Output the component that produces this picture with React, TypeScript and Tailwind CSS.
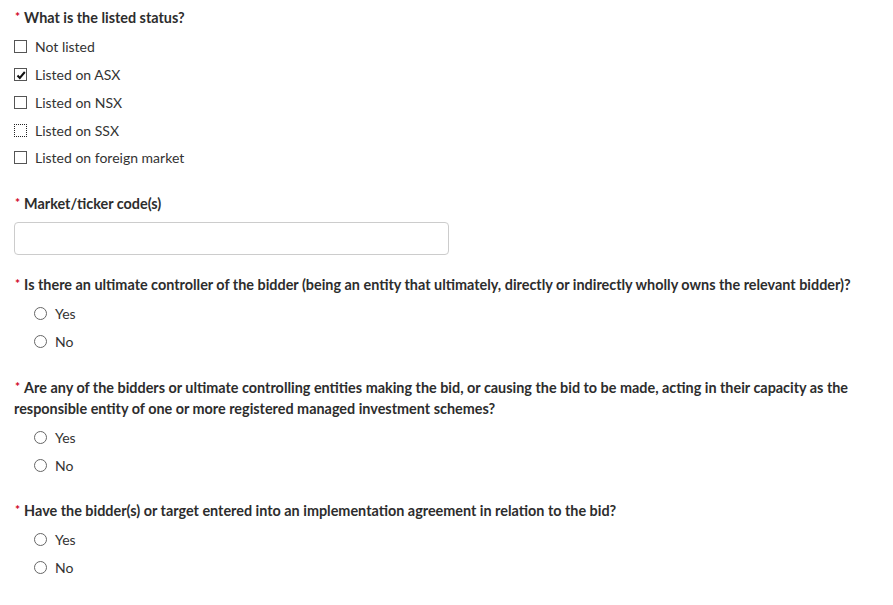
import { useState } from 'react'

type Option = { id: string; label: string }

const LISTED: Option[] = [
  { id: 'none', label: 'Not listed' },
  { id: 'asx', label: 'Listed on ASX' },
  { id: 'nsx', label: 'Listed on NSX' },
  { id: 'ssx', label: 'Listed on SSX' },
  { id: 'foreign', label: 'Listed on foreign market' },
]

const YES_NO: Option[] = [
  { id: 'yes', label: 'Yes' },
  { id: 'no', label: 'No' },
]

function Label({ children }: { children: React.ReactNode }) {
  return (
    <div className="text-[14.4px] font-bold leading-[21px] text-[#2d2d2d]">
      <span className="relative -top-[2px] mr-[4px] ml-[1px] text-[12px] leading-none text-[#d0021b]">*</span>
      {children}
    </div>
  )
}

function CheckRow({ opt, checked, focused, onToggle }: { opt: Option; checked: boolean; focused?: boolean; onToggle: () => void }) {
  return (
    <label className="flex h-[27.75px] cursor-pointer items-center" onClick={onToggle}>
      <span
        className={`flex h-[13px] w-[13px] items-center justify-center border bg-white ${
          focused ? 'border-dotted border-[#222]' : 'border-[#555]'
        }`}
      >
        {checked && (
          <svg viewBox="0 0 10 10" className="h-[10px] w-[10px]">
            <path d="M1.5 5.5 L3.8 8 L8.8 2" fill="none" stroke="#111" strokeWidth="2" />
          </svg>
        )}
      </span>
      <span className="ml-[8px] text-[14px] text-[#333]">{opt.label}</span>
    </label>
  )
}

function RadioGroup({ name, value, onChange }: { name: string; value: string; onChange: (v: string) => void }) {
  return (
    <div className="mt-[5px] pl-[20px]">
      {YES_NO.map((o) => (
        <label key={name + o.id} className="flex h-[28px] cursor-pointer items-center" onClick={() => onChange(o.id)}>
          <span className="flex h-[13px] w-[13px] items-center justify-center rounded-full border border-[#666] bg-white">
            {value === o.id && <span className="h-[5px] w-[5px] rounded-full bg-[#333]" />}
          </span>
          <span className="ml-[8px] text-[14px] text-[#333]">{o.label}</span>
        </label>
      ))}
    </div>
  )
}

export default function App() {
  const [listed, setListed] = useState<string[]>(['asx'])
  const [answers, setAnswers] = useState<Record<string, string>>({})

  const toggle = (id: string) =>
    setListed((l) => (l.includes(id) ? l.filter((x) => x !== id) : [...l, id]))
  const setAnswer = (k: string) => (v: string) => setAnswers((a) => ({ ...a, [k]: v }))

  return (
    <div className="min-h-screen bg-white pt-[7px] pl-[14px]" style={{ fontFamily: 'Lato, "Open Sans", sans-serif' }}>
      <div className="w-[860px]">
        <Label>What is the listed status?</Label>
        <div className="mt-[5px]">
          {LISTED.map((o) => (
            <CheckRow key={o.id} opt={o} checked={listed.includes(o.id)} focused={o.id === 'ssx'} onToggle={() => toggle(o.id)} />
          ))}
        </div>

        <div className="mt-[21px]">
          <Label>Market/ticker code(s)</Label>
          <input
            type="text"
            className="mt-[8px] h-[33px] w-[435px] rounded-[4px] border border-[#ccc] px-[8px] text-[14px] outline-none"
          />
        </div>

        <div className="mt-[19px]">
          <Label>
            Is there an ultimate controller of the bidder (being an entity that ultimately, directly or indirectly wholly owns the relevant bidder)?
          </Label>
          <RadioGroup name="controller" value={answers.controller ?? ''} onChange={setAnswer('controller')} />
        </div>

        <div className="mt-[21px]">
          <Label>
            Are any of the bidders or ultimate controlling entities making the bid, or causing the bid to be made, acting in their capacity as the responsible entity of one or more registered managed investment schemes?
          </Label>
          <RadioGroup name="mis" value={answers.mis ?? ''} onChange={setAnswer('mis')} />
        </div>

        <div className="mt-[20px]">
          <Label>Have the bidder(s) or target entered into an implementation agreement in relation to the bid?</Label>
          <RadioGroup name="impl" value={answers.impl ?? ''} onChange={setAnswer('impl')} />
        </div>
      </div>
    </div>
  )
}
